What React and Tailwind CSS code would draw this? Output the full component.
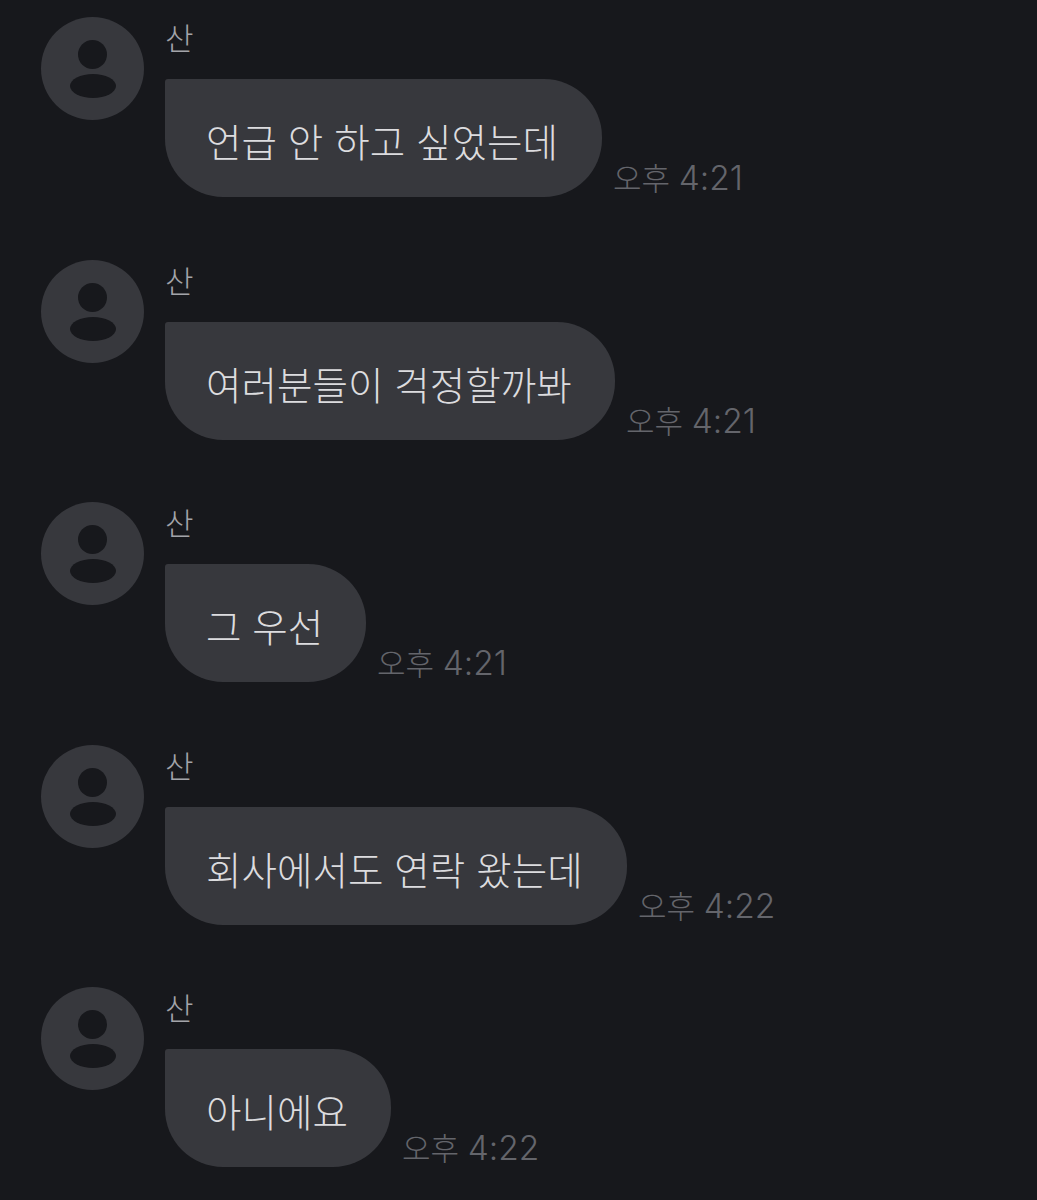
const messages = [
  { text: "언급 안 하고 싶었는데", time: "4:21", bubble: "w-[437px]" },
  { text: "여러분들이 걱정할까봐", time: "4:21", bubble: "w-[450px]" },
  { text: "그 우선", time: "4:21", bubble: "w-[201px]" },
  { text: "회사에서도 연락 왔는데", time: "4:22", bubble: "w-[462px]" },
  { text: "아니에요", time: "4:22", bubble: "w-[226px]" },
];

function Avatar() {
  return (
    <div className="w-[103px] h-[103px] shrink-0 rounded-full bg-[#37383d] flex flex-col items-center">
      <div className="mt-[23px] w-[29px] h-[29px] rounded-full bg-[#17181c]" />
      <div className="mt-[5px] w-[46px] h-[24px] rounded-[50%] bg-[#17181c]" />
    </div>
  );
}

function Message({ text, time, bubble }) {
  return (
    <div className="flex gap-[21px] h-[180px]">
      <Avatar />
      <div className="flex flex-col items-start">
        <div className="h-[62px] pt-[2px] text-[31px] leading-[40px] font-light text-[#a3a4a9]">산</div>
        <div className="flex items-end gap-[11px]">
          <div className={`${bubble} h-[118px] flex items-center pl-[41px] pt-[10px] rounded-[3px_58px_58px_58px] bg-[#37383d] text-[38.6px] leading-[50px] font-light text-[#dcdcdf] whitespace-nowrap`}>
            {text}
          </div>
          <div className="mb-[-2px] text-[31px] leading-[40px] font-light text-[#64656b] whitespace-nowrap">
            오후 <span className="text-[33.5px]">{time}</span>
          </div>
        </div>
      </div>
    </div>
  );
}

export default function App() {
  return (
    <div
      className="w-[1037px] h-[1200px] overflow-hidden bg-[#17181c] pl-[41px] pt-[17px] flex flex-col gap-[62.5px]"
      style={{ fontFamily: '"Inter", "Noto Sans CJK KR", sans-serif' }}
    >
      {messages.map((m, i) => (
        <Message key={i} {...m} />
      ))}
    </div>
  );
}
